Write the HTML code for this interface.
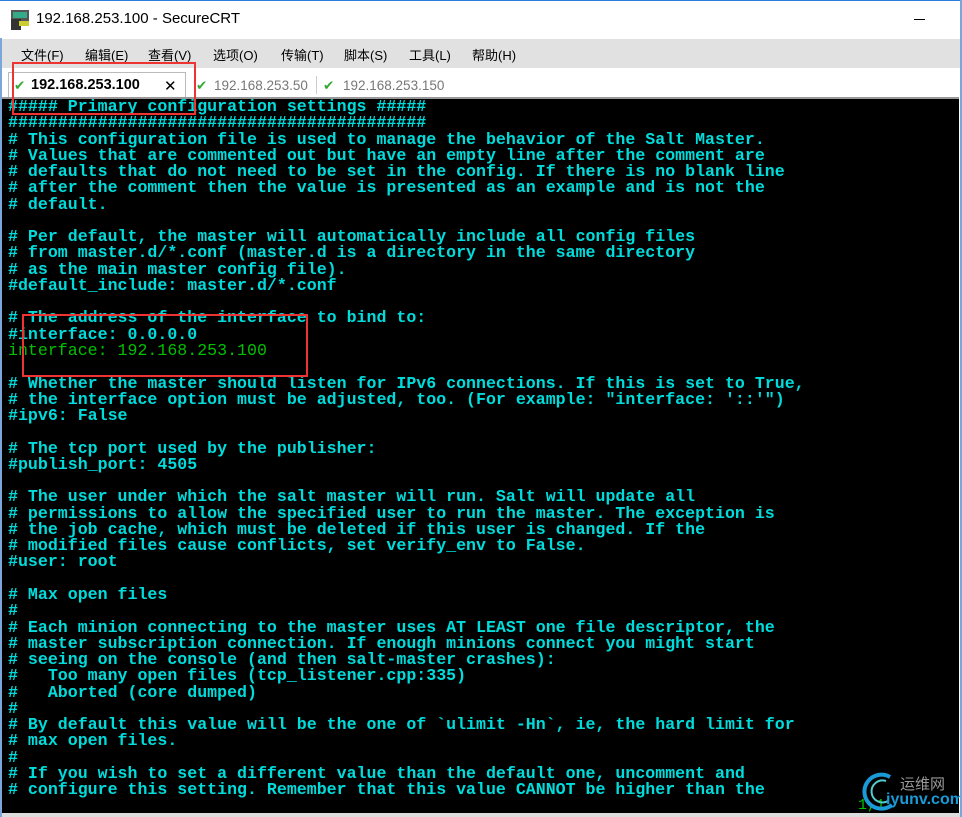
<!DOCTYPE html><html><head><meta charset="utf-8"><style>
body{margin:0;width:962px;height:817px;overflow:hidden;background:#fff;font-family:"Liberation Sans","Noto Sans CJK SC",sans-serif;position:relative}
.title{position:absolute;top:0;left:0;width:962px;height:38px;border-top:1px solid #2b7fd9;box-sizing:border-box}
.title span{position:absolute;left:36px;top:9px;font-size:15px;color:#000}
.menu{position:absolute;top:39px;left:0;width:962px;height:29px;background:#e1e1e1;font-size:13px}
.menu span{position:absolute;top:6px}
.tabs{position:absolute;top:68px;left:0;width:962px;height:29px;background:#fff;font-size:13.5px}
.term{position:absolute;top:97px;left:2px;width:957px;height:716px;background:#000;border-top:2px solid #999;box-sizing:border-box}
pre{margin:0;position:absolute;left:6px;top:0px;font-family:"Liberation Mono",monospace;font-weight:bold;font-size:16.6px;line-height:16.27px;color:#00dcdc;letter-spacing:0}
.g{color:#00c000;font-weight:normal}
.box{position:absolute;border:2px solid #ee3333}
</style></head><body>
<div class="title"><svg style="position:absolute;left:11px;top:9px" width="18" height="20"><rect x="0" y="0" width="18" height="11" fill="#555"/><rect x="2" y="2" width="14" height="6" fill="#3a8"/><rect x="0" y="9" width="10" height="11" fill="#333"/><rect x="8" y="11" width="10" height="5" fill="#cc3"/></svg><span>192.168.253.100 - SecureCRT</span>
<div style="position:absolute;left:914px;top:18px;width:11px;height:1px;background:#000"></div></div>
<div class="menu"><span style="left:21px">文件(F)</span><span style="left:85px">编辑(E)</span><span style="left:148px">查看(V)</span><span style="left:213px">选项(O)</span><span style="left:281px">传输(T)</span><span style="left:344px">脚本(S)</span><span style="left:409px">工具(L)</span><span style="left:472px">帮助(H)</span></div>
<div class="tabs">
<div style="position:absolute;left:8px;top:4px;width:176px;height:25px;border:1px solid #bbb;border-bottom:none;background:#fff"></div>
<span style="position:absolute;left:14px;top:10px;color:#3a3">✔</span><span style="position:absolute;left:31px;top:9px;font-weight:bold;font-size:14.5px">192.168.253.100</span><span style="position:absolute;left:164px;top:9px;font-size:15px">✕</span>
<span style="position:absolute;left:196px;top:10px;color:#3a3">✔</span><span style="position:absolute;left:214px;top:10px;color:#777">192.168.253.50</span>
<div style="position:absolute;left:316px;top:8px;width:1px;height:18px;background:#ccc"></div>
<span style="position:absolute;left:323px;top:10px;color:#3a3">✔</span><span style="position:absolute;left:343px;top:10px;color:#777">192.168.253.150</span>
</div>
<div class="term"><pre>##### Primary configuration settings #####
##########################################
# This configuration file is used to manage the behavior of the Salt Master.
# Values that are commented out but have an empty line after the comment are
# defaults that do not need to be set in the config. If there is no blank line
# after the comment then the value is presented as an example and is not the
# default.

# Per default, the master will automatically include all config files
# from master.d/*.conf (master.d is a directory in the same directory
# as the main master config file).
#default_include: master.d/*.conf

# The address of the interface to bind to:
#interface: 0.0.0.0
<span class="g">interface: 192.168.253.100</span>

# Whether the master should listen for IPv6 connections. If this is set to True,
# the interface option must be adjusted, too. (For example: "interface: '::'")
#ipv6: False

# The tcp port used by the publisher:
#publish_port: 4505

# The user under which the salt master will run. Salt will update all
# permissions to allow the specified user to run the master. The exception is
# the job cache, which must be deleted if this user is changed. If the
# modified files cause conflicts, set verify_env to False.
#user: root

# Max open files
#
# Each minion connecting to the master uses AT LEAST one file descriptor, the
# master subscription connection. If enough minions connect you might start
# seeing on the console (and then salt-master crashes):
#   Too many open files (tcp_listener.cpp:335)
#   Aborted (core dumped)
#
# By default this value will be the one of `ulimit -Hn`, ie, the hard limit for
# max open files.
#
# If you wish to set a different value than the default one, uncomment and
# configure this setting. Remember that this value CANNOT be higher than the</pre>
<span style="position:absolute;left:856px;top:698px;color:#00c000;font-family:'Liberation Mono',monospace;font-size:15px">1,1</span>
<svg style="position:absolute;left:858px;top:672px" width="40" height="40"><path d="M30 6 A17 17 0 1 0 32 34" stroke="#1a9ad6" stroke-width="4" fill="none"/><path d="M26 10 A11 11 0 1 0 28 30" stroke="#5cc" stroke-width="2" fill="none"/></svg>
<span style="position:absolute;left:898px;top:674px;color:#999;font-size:15px">运维网</span>
<span style="position:absolute;left:884px;top:692px;color:#1a9ad6;font-size:16px;font-weight:bold">iyunv.com</span>
</div>
<div style="position:absolute;top:813px;left:0;width:962px;height:4px;background:#ddd"></div>
<div style="position:absolute;top:0;left:960px;width:2px;height:817px;background:#7aa7d9"></div>
<div style="position:absolute;top:38px;left:0;width:2px;height:779px;background:#7aa7d9"></div>
<div class="box" style="left:12px;top:62px;width:180px;height:49px"></div>
<div class="box" style="left:22px;top:314px;width:282px;height:59px"></div>
</body></html>
